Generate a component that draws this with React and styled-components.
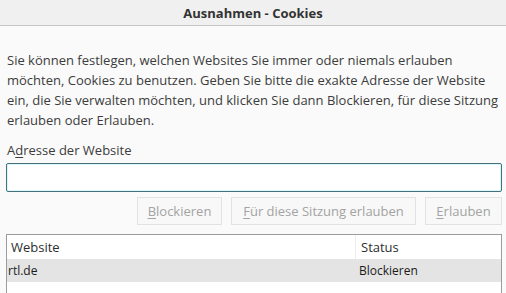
import React from "react";
import styled, { createGlobalStyle } from "styled-components";

const Global = createGlobalStyle`
  html, body { margin: 0; padding: 0; background: #fafafa; }
  body { font-family: "Open Sans", "Noto Sans", sans-serif; color: #3b3b3b; }
`;

const Window = styled.div`
  width: 506px;
  height: 293px;
  overflow: hidden;
  display: flex;
  flex-direction: column;
  background: #fafafa;
`;

const TitleBar = styled.div`
  flex-shrink: 0;
  height: 26px;
  box-sizing: border-box;
  border-bottom: 1px solid #c6c6c6;
  background: #f0f0f0;
  display: flex;
  align-items: center;
  justify-content: center;
  font-weight: 700;
  font-size: 13px;
  color: #333;
`;

const Body = styled.div`
  flex-shrink: 0;
  padding: 0 4px 0 6px;
  display: flex;
  flex-direction: column;
`;

const Intro = styled.p`
  margin: 24px 0 0 1px;
  font-size: 13px;
  line-height: 20px;
  color: #3c3c3c;
`;

const Label = styled.div`
  margin: 10px 0 0 1px;
  font-size: 13px;
  line-height: 20px;
  color: #3c3c3c;
`;

const Key = styled.span`
  text-decoration: underline;
  text-underline-offset: 2px;
`;

const Input = styled.div`
  flex-shrink: 0;
  margin-top: 3px;
  height: 29px;
  box-sizing: border-box;
  border: 1px solid #44717c;
  border-radius: 2px;
  box-shadow: inset 0 0 0 1px #d9f6fb;
  background: #fff;
`;

const ButtonRow = styled.div`
  margin-top: 5px;
  display: flex;
  justify-content: flex-end;
  gap: 9px;
`;

const Button = styled.div`
  flex-shrink: 0;
  height: 28px;
  box-sizing: border-box;
  width: ${(p) => p.$w}px;
  border: 1px solid #e2e2e2;
  background: #f8f8f8;
  color: #a3a3a3;
  font-size: 13px;
  display: flex;
  align-items: center;
  justify-content: center;
`;

const Table = styled.div`
  margin-top: 9px;
  border: 1px solid #9c9c9c;
  border-bottom: none;
  height: 80px;
  background: #fff;
  display: flex;
  flex-direction: column;
`;

const Row = styled.div`
  flex-shrink: 0;
  display: grid;
  grid-template-columns: 348px 1fr;
  height: ${(p) => p.$h}px;
  align-items: center;
  background: ${(p) => (p.$selected ? "#e4e4e4" : "transparent")};
  font-size: ${(p) => (p.$header ? "13px" : "12px")};
  color: ${(p) => (p.$header ? "#2e2e2e" : "#1a1a1a")};
`;

const Cell = styled.div`
  height: 100%;
  display: flex;
  align-items: center;
  padding-left: ${(p) => p.$pad}px;
  border-left: ${(p) => (p.$divider ? "1px solid #ececec" : "none")};
`;

export default function App() {
  return (
    <>
      <Global />
      <Window>
        <TitleBar>Ausnahmen - Cookies</TitleBar>
        <Body>
          <Intro>
            Sie können festlegen, welchen Websites Sie immer oder niemals erlauben
            <br />
            möchten, Cookies zu benutzen. Geben Sie bitte die exakte Adresse der Website
            <br />
            ein, die Sie verwalten möchten, und klicken Sie dann Blockieren, für diese Sitzung
            <br />
            erlauben oder Erlauben.
          </Intro>
          <Label>
            A<Key>d</Key>resse der Website
          </Label>
          <Input />
          <ButtonRow>
            <Button $w={85}>
              <Key>B</Key>lockieren
            </Button>
            <Button $w={185}>
              <Key>F</Key>ür diese Sitzung erlauben
            </Button>
            <Button $w={77}>
              <Key>E</Key>rlauben
            </Button>
          </ButtonRow>
          <Table>
            <Row $header $h={24}>
              <Cell $pad={4}>Website</Cell>
              <Cell $pad={5} $divider>Status</Cell>
            </Row>
            <Row $selected $h={23}>
              <Cell $pad={1}>rtl.de</Cell>
              <Cell $pad={4}>Blockieren</Cell>
            </Row>
          </Table>
        </Body>
      </Window>
    </>
  );
}
